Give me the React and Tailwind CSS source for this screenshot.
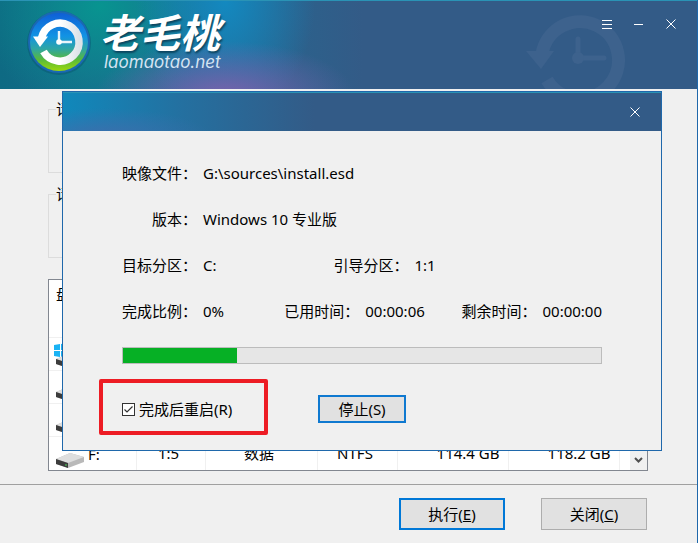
import React, { useState } from 'react';

const INFO_ROWS = [
    { label: '映像文件：', value: 'G:\\sources\\install.esd' },
    { label: '版本：', value: 'Windows 10 专业版' },
];

const DRIVES = ['windows', 'disk', 'disk'];

function ClockArrow({ className }) {
    return (
        <svg viewBox="0 0 100 100" className={className} aria-hidden="true">
            <path d="M17 53 A38.5 38.5 0 1 1 22 79" fill="none" stroke="currentColor" strokeWidth="13" />
            <path d="M1 50 L29 50 L16 68 Z" fill="currentColor" />
            <path d="M53 38 V57 H79" fill="none" stroke="currentColor" strokeWidth="5" strokeLinecap="round" />
            <circle cx="53" cy="57" r="6" fill="currentColor" />
        </svg>
    );
}

function Logo() {
    return (
        <svg viewBox="0 0 66 66" className="size-[66px] shrink-0" aria-hidden="true">
            <defs>
                <linearGradient id="badge" x1="0" y1="0" x2="0" y2="1">
                    <stop offset="0" stopColor="#0f5fd6" />
                    <stop offset="0.4" stopColor="#1293e4" />
                    <stop offset="0.62" stopColor="#2fa6a4" />
                    <stop offset="0.8" stopColor="#57b93c" />
                    <stop offset="1" stopColor="#9bd80c" />
                </linearGradient>
                <linearGradient id="ring" x1="0" y1="0" x2="1" y2="0">
                    <stop offset="0.5" stopColor="#ffffff" />
                    <stop offset="1" stopColor="#dce3e8" />
                </linearGradient>
            </defs>
            <circle cx="33" cy="34" r="32" fill="#0a4a6d" opacity="0.4" />
            <circle cx="33" cy="33" r="31" fill="#1a68b4" />
            <circle cx="33" cy="33" r="29" fill="url(#badge)" />
            <path d="M15.5 29 A19 19 0 1 1 17.5 42.5" fill="none" stroke="url(#ring)" strokeWidth="7.5" />
            <path d="M7 27.5 L22 27.5 L14 38 Z" fill="#ffffff" />
            <path d="M33 22 V33 H46" fill="none" stroke="#e7f4fb" strokeWidth="2.4" />
            <circle cx="33" cy="33" r="2.8" fill="#ffffff" />
        </svg>
    );
}

function CloseIcon() {
    return (
        <svg viewBox="0 0 10 10" className="size-[10px]" aria-hidden="true">
            <path d="M0.5 0.5 L9.5 9.5 M9.5 0.5 L0.5 9.5" stroke="#ffffff" strokeWidth="1" />
        </svg>
    );
}

function DriveIcon({ windows }) {
    return (
        <svg viewBox="0 0 32 32" className="size-8" aria-hidden="true">
            {windows && <path d="M1 7 L7 6 V12 H1 Z M8 6 L18 4 V12 H8 Z M1 13 H7 V19 L1 18 Z M8 13 H18 V20 L8 19 Z" fill="#1ab3f4" />}
            <path d="M3 21 L17 15 L31 19 V24 L15 30 L3 26 Z" fill="#b9b9b9" />
            <path d="M3 21 L17 15 L31 19 L15 25 Z" fill="#dedede" />
            <path d="M3 21 L15 25 V30 L3 26 Z" fill="#3c3c3c" />
            <path d="M12 27 H14" stroke="#4fd35a" strokeWidth="1" />
        </svg>
    );
}

function TitleBar() {
    return (
        <header className="relative flex h-[89px] shrink-0 items-start justify-between overflow-hidden border-t border-[#2a93b5] bg-[radial-gradient(ellipse_130px_55px_at_225px_95px,#7962ad,#7962ad00),radial-gradient(ellipse_90px_120px_at_225px_0px,#1389c0,#1389c000),radial-gradient(ellipse_120px_110px_at_100px_5px,#089490,#08949000),linear-gradient(90deg,#0e6a83_0%,#1f6c94_25%,#335b87_52%)]">
            <div className="flex gap-2 pt-2 pl-[26px]">
                <Logo />
                <div className="flex flex-col gap-px text-white italic">
                    <span className="pt-1 text-[40px] leading-10 font-bold [text-shadow:1px_2px_2px_#0b4560]">老毛桃</span>
                    <span className="pl-1 font-[family-name:Inter,sans-serif] text-[17px] leading-4 text-[#d5e4f3]">laomaotao.net</span>
                </div>
            </div>
            <ClockArrow className="absolute -bottom-3 right-[72px] size-[100px] text-[#3d628d]" />
            <div className="relative flex gap-[21px] pt-[17px] pr-[19px]">
                <button aria-label="菜单" className="flex h-3 w-[11px] flex-col justify-center gap-[3px]">
                    <span className="h-px w-[10px] bg-white" />
                    <span className="h-px w-[10px] bg-white" />
                    <span className="h-px w-[10px] bg-white" />
                </button>
                <button aria-label="最小化" className="flex h-3 w-[11px] items-center">
                    <span className="h-px w-[9px] bg-white" />
                </button>
                <button aria-label="关闭窗口" className="flex h-3 w-3 items-center"><CloseIcon /></button>
            </div>
        </header>
    );
}

function Field({ label, value }) {
    return (
        <div className="flex gap-[6px]">
            <dt className="w-[75px] shrink-0 text-right">{label}</dt>
            <dd className="whitespace-nowrap">{value}</dd>
        </div>
    );
}

function ProgressDialog() {
    const [restart, setRestart] = useState(true);
    const percent = 23.75;

    return (
        <section role="dialog" aria-label="进度" className="absolute top-[91px] right-[35px] left-[62px] h-[360px] border border-[#1f68ab] bg-[#f0f0f0]">
            <div className="flex h-[39px] items-center justify-end border-t border-[#2a93b5] bg-[radial-gradient(ellipse_110px_30px_at_40px_45px,#3f6dac,#3f6dac00),linear-gradient(90deg,#1088bb_0%,#2470a0_20%,#335b87_42%)] pr-5">
                <button aria-label="关闭对话框" className="p-px"><CloseIcon /></button>
            </div>

            <div className="px-[59px] pt-[30px]">
                <dl className="flex flex-col gap-[22px]">
                    {INFO_ROWS.map(row => (
                        <Field key={row.label} label={row.label} value={row.value} />
                    ))}
                    <div className="flex gap-[117px]">
                        <Field label="目标分区：" value="C:" />
                        <Field label="引导分区：" value="1:1" />
                    </div>
                    <div className="flex">
                        <div className="w-[163px]"><Field label="完成比例：" value="0%" /></div>
                        <div className="w-[178px]"><Field label="已用时间：" value="00:00:06" /></div>
                        <Field label="剩余时间：" value="00:00:00" />
                    </div>
                </dl>

                <div className="mt-6 h-[17px] border border-[#bcbcbc] bg-[#e6e6e6]">
                    <div className="h-full bg-[#06b025]" style={{ width: `${percent}%` }} />
                </div>

                <div className="mt-[31px] flex items-center">
                    <label className="flex w-[196px] items-center gap-1">
                        <span className="relative flex size-[13px]">
                            <input
                                type="checkbox"
                                checked={restart}
                                onChange={(e) => setRestart(e.target.checked)}
                                className="size-[13px] appearance-none border border-[#333333] bg-white"
                            />
                            {restart && (
                                <svg viewBox="0 0 13 13" className="pointer-events-none absolute inset-0 size-[13px]" aria-hidden="true">
                                    <path d="M2.5 6.5 L5 9 L10.5 3.5" fill="none" stroke="#333333" strokeWidth="1.2" />
                                </svg>
                            )}
                        </span>
                        完成后重启(R)
                    </label>
                    <button className="h-7 w-[88px] border-2 border-[#0f79d0] bg-[#e1e1e1] leading-5">停止(S)</button>
                </div>
            </div>

            {/* Highlight */}
            <div className="pointer-events-none absolute top-[287px] left-[36px] h-[56px] w-[169px] rounded-xs border-4 border-[#ed1c24]" />
        </section>
    );
}

function PartitionTable() {
    return (
        <div className="flex h-[192px] overflow-hidden border border-[#828790] bg-white">
            <table className="flex-1 table-fixed border-collapse text-center">
                <colgroup>
                    <col className="w-[87px]" />
                    <col className="w-[69px]" />
                    <col className="w-[112px]" />
                    <col className="w-[80px]" />
                    <col className="w-[111px]" />
                    <col className="w-[111px]" />
                    <col />
                </colgroup>
                <thead>
                    <tr className="h-[57px] border-b border-[#f0f0f0] align-top">
                        <th className="pt-[2px] pl-[7px] text-left font-normal">盘</th>
                        <th colSpan={6} />
                    </tr>
                </thead>
                <tbody>
                    {DRIVES.map((kind, i) => (
                        <tr key={i} className="h-[33px] border-b border-[#f0f0f0]">
                            <td className="pl-1"><DriveIcon windows={kind === 'windows'} /></td>
                            <td colSpan={6} />
                        </tr>
                    ))}
                    <tr className="h-[33px]">
                        <td className="border-r border-[#f0f0f0] pl-1">
                            <span className="flex h-8 items-center gap-[3px]"><DriveIcon />F:</span>
                        </td>
                        <td className="border-r border-[#f0f0f0] pr-1 pb-[2px]">1:5</td>
                        <td className="border-r border-[#f0f0f0] pr-1 pb-[2px]">数据</td>
                        <td className="border-r border-[#f0f0f0] pr-1 pb-[2px]">NTFS</td>
                        <td className="border-r border-[#f0f0f0] pr-2 pb-[2px] text-right">114.4 GB</td>
                        <td className="border-r border-[#f0f0f0] pr-2 pb-[2px] text-right">118.2 GB</td>
                        <td />
                    </tr>
                </tbody>
            </table>
            <div className="flex w-[17px] items-end justify-center bg-[#f0f0f0] pb-[6px]">
                <svg viewBox="0 0 9 7" className="h-[7px] w-[9px]" aria-hidden="true">
                    <path d="M1 1 L4.5 4.5 L8 1" fill="none" stroke="#505050" strokeWidth="2" />
                </svg>
            </div>
        </div>
    );
}

export default function App() {
    return (
        <div className="relative flex min-h-screen flex-col border-r border-[#1f68ab] bg-[#f0f0f0] font-['Noto_Sans','Noto_Sans_CJK_SC',sans-serif] text-[15px] leading-6 text-black">
            <TitleBar />

            <main className="flex-1 pr-[49px] pl-12">
                <fieldset className="mt-2 mb-[9px] h-[76px] border border-[#dcdcdc] pl-[7px]">
                    <legend>请</legend>
                </fieldset>
                <fieldset className="mb-[21px] h-[76px] border border-[#dcdcdc] pl-[7px]">
                    <legend>请</legend>
                </fieldset>
                <PartitionTable />
            </main>

            <footer className="mt-[13px] flex justify-end gap-9 border-t border-[#a0a0a0] pt-[13px] pr-[50px] pb-[13px]">
                <button className="h-8 w-[106px] border-2 border-[#0078d7] bg-[#e1e1e1]">执行(<u>E</u>)</button>
                <button className="h-8 w-[106px] border border-[#adadad] bg-[#e1e1e1]">关闭(<u>C</u>)</button>
            </footer>

            <ProgressDialog />
        </div>
    );
}
